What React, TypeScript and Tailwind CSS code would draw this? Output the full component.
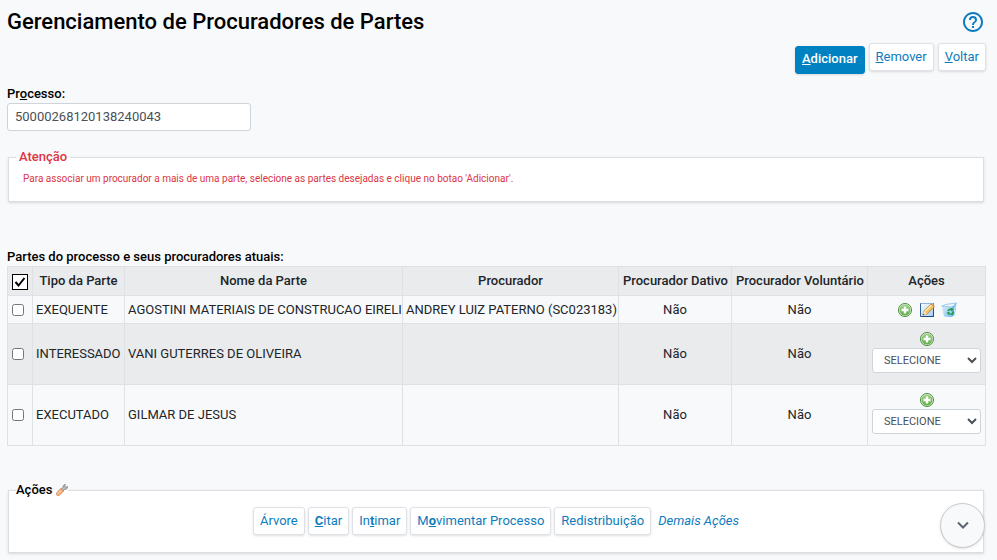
import type { ReactNode } from "react";
import clsx from "clsx";

function PlusIcon() {
  return (
    <svg viewBox="0 0 16 16" className="size-4" aria-hidden="true">
      <defs>
        <linearGradient id="plusGreen" x1="0" y1="0" x2="0" y2="1">
          <stop offset="0" stopColor="#a3d18e" />
          <stop offset="1" stopColor="#5fae49" />
        </linearGradient>
      </defs>
      <circle cx="8" cy="8" r="6.6" fill="#d3eac8" stroke="#4c8a40" strokeWidth=".9" />
      <circle cx="8" cy="8" r="5.5" fill="url(#plusGreen)" />
      <path d="M6.800 4.500h2.400v2.300h2.300v2.400H9.200v2.300H6.800V9.200H4.500V6.800h2.300z" fill="#fff" />
    </svg>
  );
}

function EditIcon() {
  return (
    <svg viewBox="0 0 16 16" className="size-4" aria-hidden="true">
      <defs>
        <linearGradient id="pageBlue" x1="0" y1="0" x2="1" y2="1">
          <stop offset="0" stopColor="#ffffff" />
          <stop offset="1" stopColor="#9ecbf5" />
        </linearGradient>
      </defs>
      <path d="M1.5 1v13.5H14.5V1" fill="url(#pageBlue)" stroke="#2d5f9f" />
      <path d="M1.5 1.5h13" stroke="#8db4dc" />
      <path d="M3 14.5h11.5V8" stroke="#1f4b88" fill="none" />
      <path d="M5 8.8 12 2l3.2 3L8 12l-4.2 1z" fill="#f3c065" stroke="#b9782c" strokeWidth=".7" />
      <path d="M6 9.3 12.4 3.2" stroke="#fff0a8" strokeWidth="1.2" />
      <path d="m5 8.8 3 3.2-4.2 1z" fill="#f9e2bd" />
      <path d="m4.2 11.6 1.1 1.1-1.5.4z" fill="#333" />
      <path d="m12 2 1-1 3 3-.9 1z" fill="#d9a08a" />
    </svg>
  );
}

function RecycleIcon() {
  return (
    <svg viewBox="0 0 16 16" className="size-4" aria-hidden="true">
      <defs>
        <linearGradient id="binBlue" x1="0" y1="0" x2="1" y2="1">
          <stop offset="0" stopColor="#d9effc" />
          <stop offset="1" stopColor="#7cbdec" />
        </linearGradient>
      </defs>
      <path d="M.8 4.200 11 5l-.5 10.300-7.500-.8z" fill="url(#binBlue)" />
      <path d="M11 5 15.500 1l-1.700 11.800-3.300 2.500z" fill="#6fb3e8" />
      <path d="M.8 4.200 5 2.400 15.500 1 11 5z" fill="#eef8fe" stroke="#79b6e4" strokeWidth=".7" />
      <path d="m13.500 4 1.300-1.500-1.200 9.500-1.200 1z" fill="#c3e2f8" />
      <path d="M7.200 9.200c.2-1.400 1.400-2.200 2.800-1.800M12.200 9.300c.2 1.300-.4 2.400-1.600 2.800M9.200 12.300c-1 0-1.800-.6-2.100-1.500" fill="none" stroke="#1a9a36" strokeWidth="1.600" />
      <path d="m9.800 5.800 3 1.800-2.700 1.600zM5.600 10.400l3-.4-.8 2.400zM11.300 10.600l.2 3-2.200-1.300z" fill="#1a9a36" />
    </svg>
  );
}

function WrenchIcon() {
  return (
    <svg viewBox="0 0 12 12" className="size-3" aria-hidden="true">
      <path d="M5.2 5.2 6.9 3.4C6.8 1.8 7.9.6 9.500.5L8.6 2l1.2 1.3L11.500 2.6c.2 1.7-1.2 3.1-3 2.9L6.800 7.1z" fill="#b9bcbe" stroke="#777b7e" strokeWidth=".8" />
      <path d="M4.600 4.500 7.500 7.200l-4 4c-.8.8-2.200.6-2.700 0-.6-.7-.6-1.900.1-2.600z" fill="#f4b183" stroke="#cf7a45" strokeWidth=".7" />
      <path d="M1.900 9.500 5 6.300" stroke="#fbd9bf" strokeWidth=".9" />
    </svg>
  );
}

function HelpIcon() {
  return (
    <svg viewBox="0 0 20 20" className="size-5" fill="#0d7cbe" aria-hidden="true">
      <path d="M9 16h2v-2H9v2zm1-16C4.480 0 0 4.480 0 10s4.480 10 10 10 10-4.480 10-10S15.520 0 10 0zm0 18c-4.410 0-8-3.590-8-8s3.590-8 8-8 8 3.590 8 8-3.590 8-8 8zm0-14a4 4 0 0 0-4 4h2c0-1.100.9-2 2-2s2 .9 2 2c0 2-3 1.750-3 5h2c0-2.250 3-2.500 3-5a4 4 0 0 0-4-4z" />
    </svg>
  );
}

function Button({ children, primary = false }: { children: ReactNode; primary?: boolean }) {
  return (
    <button
      type="button"
      className={clsx(
        "h-7 rounded-[3px] border px-[6px] leading-4 whitespace-nowrap shadow-sm",
        primary
          ? "mt-[3px] border-[#0081c2] bg-[#0081c2] pb-[2px] font-medium text-white"
          : "border-[#dee2e6] bg-white text-[#0d7cbe]",
      )}
    >
      {children}
    </button>
  );
}

function IconButton({ label, children }: { label: string; children: ReactNode }) {
  return (
    <button type="button" aria-label={label} className="block size-4">
      {children}
    </button>
  );
}

const parties = [
  { type: "EXEQUENTE", name: "AGOSTINI MATERIAIS DE CONSTRUCAO EIRELI", attorney: "ANDREY LUIZ PATERNO (SC023183)" },
  { type: "INTERESSADO", name: "VANI GUTERRES DE OLIVEIRA", attorney: "" },
  { type: "EXECUTADO", name: "GILMAR DE JESUS", attorney: "" },
];

const cell = "border border-[#dee2e6] px-1";
const textCell = "border border-[#dee2e6] px-[3px]";

export default function App() {
  return (
    <main className="min-h-screen bg-[#f8f9fb] pt-2 pr-[11px] pb-[7px] pl-[7px] font-['Roboto',sans-serif] text-[13px] leading-4 text-[#212529]">
      <header className="flex h-7 items-center justify-between pr-[3px]">
        <h1 className="text-[22px] leading-7 font-medium text-black">Gerenciamento de Procuradores de Partes</h1>
        <button type="button" aria-label="Ajuda">
          <HelpIcon />
        </button>
      </header>

      <div className="mt-[7px] flex items-start justify-end gap-1">
        <Button primary>
          <u>A</u>dicionar
        </Button>
        <Button>
          <u>R</u>emover
        </Button>
        <Button>
          <u>V</u>oltar
        </Button>
      </div>

      <div className="mt-3">
        <label htmlFor="processo" className="block font-medium text-black">
          Pr<u>o</u>cesso:
        </label>
        <input
          id="processo"
          type="text"
          defaultValue="50000268120138240043"
          className="mt-px block h-7 w-[244px] rounded-[3px] border border-[#ced4da] bg-white px-[7px] pb-[2px] text-[#495057]"
        />
      </div>

      <fieldset className="mr-[2px] ml-px mt-[18px] h-[53px] border border-[#dcdee1] bg-white px-[7px] shadow-sm">
        <legend className="px-[3px] font-medium text-[#dc3545]">Atenção</legend>
        <p className="mt-[6px] px-[7px] text-[10px] leading-4 text-[#dc3545]">
          Para associar um procurador a mais de uma parte, selecione as partes desejadas e clique no botao 'Adicionar'.
        </p>
      </fieldset>

      <table className="mt-[47px] w-full table-fixed border-collapse">
        <caption className="pb-px text-left font-medium text-black">Partes do processo e seus procuradores atuais:</caption>
        <colgroup>
          <col className="w-[25px]" />
          <col className="w-[92px]" />
          <col />
          <col className="w-[216px]" />
          <col className="w-[113px]" />
          <col className="w-[136px]" />
          <col className="w-[118px]" />
        </colgroup>
        <thead>
          <tr className="h-[29px] bg-[#e9ebed] whitespace-nowrap">
            <th className={cell}>
              <label className="relative mt-[2px] block size-4">
                <input
                  type="checkbox"
                  defaultChecked
                  aria-label="Selecionar todas as partes"
                  className="peer block size-4 appearance-none border border-black bg-white"
                />
                <svg viewBox="0 0 16 16" className="absolute inset-0 hidden size-4 peer-checked:block" aria-hidden="true">
                  <path d="m3.500 8 3 3.500 6-7.500" fill="none" stroke="#000" strokeWidth="2" />
                </svg>
              </label>
            </th>
            {["Tipo da Parte", "Nome da Parte", "Procurador", "Procurador Dativo", "Procurador Voluntário", "Ações"].map((title) => (
              <th key={title} scope="col" className={clsx(cell, "font-medium")}>
                {title}
              </th>
            ))}
          </tr>
        </thead>
        <tbody>
          {parties.map((party) => (
            <tr key={party.type} className={clsx("whitespace-nowrap even:bg-[#e9ebed]", party.attorney ? "h-7" : "h-[61px]")}>
              <td className={cell}>
                <input type="checkbox" aria-label={`Selecionar ${party.name}`} className="block size-3" />
              </td>
              <td className={textCell}>{party.type}</td>
              <td className={textCell}>{party.name}</td>
              <td className={textCell}>{party.attorney}</td>
              <td className={clsx(cell, "text-center")}>Não</td>
              <td className={clsx(cell, "text-center")}>Não</td>
              <td className={cell}>
                {party.attorney ? (
                  <div className="flex justify-center gap-[6px] pt-px">
                    <IconButton label="Adicionar procurador">
                      <PlusIcon />
                    </IconButton>
                    <IconButton label="Editar procurador">
                      <EditIcon />
                    </IconButton>
                    <IconButton label="Remover procurador">
                      <RecycleIcon />
                    </IconButton>
                  </div>
                ) : (
                  <div className="flex flex-col items-center pb-[5px]">
                    <IconButton label="Adicionar procurador">
                      <PlusIcon />
                    </IconButton>
                    <select
                      aria-label={`Procurador de ${party.name}`}
                      className="mt-px h-[25px] w-full rounded-[3px] border border-[#ced4da] bg-white pl-[7px] text-[11px] text-[#495057]"
                    >
                      <option>SELECIONE</option>
                    </select>
                  </div>
                )}
              </td>
            </tr>
          ))}
        </tbody>
      </table>

      <fieldset className="mr-[2px] ml-px mt-9 h-[71px] border border-[#dcdee1] bg-white px-[7px] shadow-sm">
        <legend className="font-medium text-black">
          <span className="flex items-center gap-1">
            Ações <WrenchIcon />
          </span>
        </legend>
        <div className="mt-[9px] flex items-start justify-center gap-[3px]">
          <Button>Árvore</Button>
          <Button>
            <u className="font-bold">C</u>itar
          </Button>
          <Button>
            In<u className="font-bold">t</u>imar
          </Button>
          <Button>
            M<u className="font-bold">o</u>vimentar Processo
          </Button>
          <Button>Redistribuição</Button>
          <a href="#acoes" className="ml-1 py-[6px] text-[#0d7cbe] italic">
            Demais Ações
          </a>
        </div>
      </fieldset>

      <button
        type="button"
        aria-label="Rolar para baixo"
        className="fixed right-3 bottom-3 flex size-[45px] items-center justify-center rounded-full border border-[#c5c9cd] bg-[#f8f9fb] shadow-sm"
      >
        <svg viewBox="0 0 12 8" className="mb-[2px] h-2 w-3" fill="none" stroke="#5c6570" strokeWidth="2" aria-hidden="true">
          <path d="m1 1.500 5 5 5-5" />
        </svg>
      </button>
    </main>
  );
}
